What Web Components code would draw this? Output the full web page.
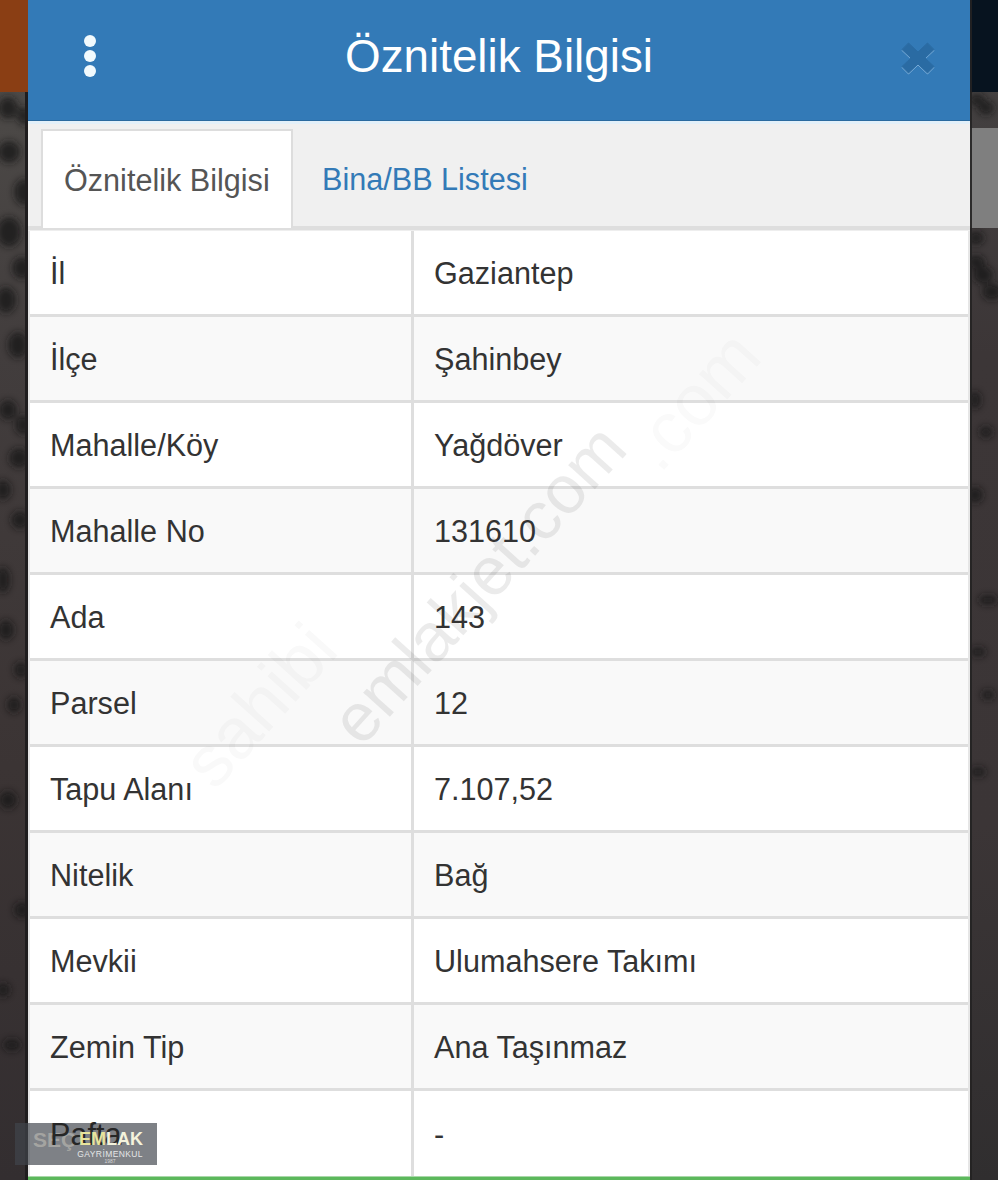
<!DOCTYPE html>
<html lang="tr">
<head>
<meta charset="utf-8">
<title>Öznitelik Bilgisi</title>
<style>
html,body{margin:0;padding:0;background:#333;}
body{font-family:"Liberation Sans",Arial,sans-serif;}
</style>
</head>
<body>
<page-frame>
  <side-strip slot="left" side="left"></side-strip>
  <info-panel>
    <panel-header slot="header" title-text="Öznitelik Bilgisi"></panel-header>
    <tab-bar slot="tabs">
      <tab-item active>Öznitelik Bilgisi</tab-item>
      <tab-item>Bina/BB Listesi</tab-item>
    </tab-bar>
    <attr-row label="İl" value="Gaziantep"></attr-row>
    <attr-row striped label="İlçe" value="Şahinbey"></attr-row>
    <attr-row label="Mahalle/Köy" value="Yağdöver"></attr-row>
    <attr-row striped label="Mahalle No" value="131610"></attr-row>
    <attr-row label="Ada" value="143"></attr-row>
    <attr-row striped label="Parsel" value="12"></attr-row>
    <attr-row label="Tapu Alanı" value="7.107,52"></attr-row>
    <attr-row striped label="Nitelik" value="Bağ"></attr-row>
    <attr-row label="Mevkii" value="Ulumahsere Takımı"></attr-row>
    <attr-row striped label="Zemin Tip" value="Ana Taşınmaz"></attr-row>
    <attr-row last label="Pafta" value="-"></attr-row>
    <water-mark slot="overlay"></water-mark>
  </info-panel>
  <side-strip slot="right" side="right"></side-strip>
  <brand-badge slot="overlay"></brand-badge>
</page-frame>
<script>
function shadow(el, html){ const r = el.attachShadow({mode:'open'}); r.innerHTML = html; return r; }

customElements.define('page-frame', class extends HTMLElement{
  constructor(){ super(); shadow(this, `<style>
    :host{display:flex;width:998px;height:1180px;overflow:hidden;position:relative;}
  </style><slot name="left"></slot><slot></slot><slot name="right"></slot><slot name="overlay"></slot>`); }
});

const spotsL = [[8,108,10,11],[24,116,7,9],[9,152,11,11],[24,192,10,13],[9,232,12,15],[22,268,10,11],[6,300,10,13],[18,345,10,13],[8,410,9,10],[23,425,8,10],[19,458,10,10],[3,490,8,10],[20,520,9,9],[3,580,7,13],[6,630,8,10],[21,670,7,8],[14,705,7,8],[8,800,9,9],[22,910,8,8],[3,990,7,7],[12,1045,9,6]];
const spotsR = [[7,100,8,6],[16,108,8,7],[6,238,8,7],[6,262,9,7],[13,275,10,9],[22,292,10,8],[5,400,6,9],[16,432,7,6],[5,495,8,8],[18,600,10,5],[8,652,8,5],[18,695,7,5],[8,772,8,5]];
customElements.define('side-strip', class extends HTMLElement{
  constructor(){ super();
    const left = this.getAttribute('side')==='left';
    const spots = (left?spotsL:spotsR).map(s=>`<ellipse cx="${s[0]}" cy="${s[1]}" rx="${s[2]}" ry="${s[3]}"/>`).join('');
    const base = left
      ? `<linearGradient id="b" x1="0" y1="0" x2="0" y2="1"><stop offset="0" stop-color="#504e4b"/><stop offset=".3" stop-color="#423d3d"/><stop offset=".65" stop-color="#3b3434"/><stop offset="1" stop-color="#332e30"/></linearGradient>`
      : `<linearGradient id="b" x1="0" y1="0" x2="0" y2="1"><stop offset="0" stop-color="#464444"/><stop offset=".3" stop-color="#3c3637"/><stop offset=".7" stop-color="#3b3536"/><stop offset="1" stop-color="#302e2f"/></linearGradient>`;
    const top = left ? '#8a3e14' : '#07131f';
    const edge = left
      ? `<rect x="25" y="92" width="3" height="1088" fill="#1f1d1e"/>`
      : `<rect x="0" y="0" width="2" height="1180" fill="#242222" opacity=".9"/>`;
    const grey = left ? '' : `<rect x="0" y="128" width="28" height="100" fill="#7f7f7f"/>`;
    shadow(this, `<style>:host{display:block;width:28px;height:1180px;flex:none;}svg{display:block;}</style>
    <svg width="28" height="1180" viewBox="0 0 28 1180" aria-hidden="true">
      <defs>${base}<filter id="f" x="-60%" y="-60%" width="220%" height="220%"><feGaussianBlur stdDeviation="3.500"/></filter></defs>
      <rect width="28" height="1180" fill="url(#b)"/>
      <g fill="#171516" filter="url(#f)" opacity=".75">${spots}</g>
      <rect width="28" height="92" fill="${top}"/>
      ${grey}${edge}
    </svg>`);
  }
});

customElements.define('info-panel', class extends HTMLElement{
  constructor(){ super(); shadow(this, `<style>
    :host{display:flex;flex-direction:column;width:942px;height:1180px;flex:none;background:#eee;position:relative;overflow:hidden;}
    .rows{display:flex;flex-direction:column;padding:0 2px;background:#e6e6e6;flex:none;}
    .foot{flex:1;background:#5cb85c;border-top:1px solid #a9d8a9;}
  </style><slot name="header"></slot><slot name="tabs"></slot><div class="rows"><slot></slot></div><div class="foot"></div><slot name="overlay"></slot>`); }
});

customElements.define('panel-header', class extends HTMLElement{
  constructor(){ super(); shadow(this, `<style>
    :host{display:grid;grid-template-columns:125px 1fr 125px;align-items:center;height:120px;flex:none;background:#337ab7;color:#fff;border-bottom:1px solid #2b6a9f;}
    .dots{display:flex;flex-direction:column;gap:3px;padding-left:56px;margin-top:-8px;}
    .dots i{display:block;width:12px;height:12px;border-radius:50%;background:#f2fafd;}
    h1{margin:0;font:400 45.8px/1 "Liberation Sans",Arial,sans-serif;text-align:center;margin-top:-6px;white-space:nowrap;}
    .close{display:flex;justify-content:flex-end;padding-right:35px;margin-top:-4px;}
    svg{display:block;filter:drop-shadow(0 1.5px 0 rgba(190,220,245,.5));}
  </style>
  <div class="dots"><i></i><i></i><i></i></div>
  <h1>${this.getAttribute('title-text')}</h1>
  <div class="close"><svg width="34" height="32" viewBox="0 0 34 32" aria-hidden="true"><path d="M1 7.500 7.500 1 17 10 26.500 1 33 7.500 24 16 33 24.500 26.500 31 17 22 7.500 31 1 24.500 10 16Z" fill="#2a6ba3" stroke="#2a6ba3" stroke-width="1" stroke-linejoin="round"/></svg></div>`); }
});

customElements.define('tab-bar', class extends HTMLElement{
  constructor(){ super(); shadow(this, `<style>
    :host{display:flex;align-items:flex-end;height:109px;box-sizing:border-box;padding:5px 0 0 13px;flex:none;background:#f0f0f0;border-top:3px solid #e3f0f9;border-bottom:4px solid #dedede;margin-bottom:1px;}
    slot{display:contents;}
  </style><slot></slot>`); }
});

customElements.define('tab-item', class extends HTMLElement{
  constructor(){ super(); shadow(this, `<style>
    :host{display:flex;align-items:center;box-sizing:border-box;height:97px;padding:0 21px;font-size:30.6px;color:#337ab7;border:2px solid transparent;border-bottom:0;white-space:nowrap;flex:none;}
    :host([active]){color:#555;background:#fff;border-color:#ddd;width:252px;margin-bottom:-2px;height:99px;}
    :host(:not([active])){padding-left:27px;}
    span{display:block;padding-top:1px;}
  </style><span><slot></slot></span>`); }
});

customElements.define('attr-row', class extends HTMLElement{
  constructor(){ super(); shadow(this, `<style>
    :host{display:grid;grid-template-columns:384px 1fr;height:86px;box-sizing:border-box;border-bottom:3px solid #dedede;background:#fff;color:#333;font-size:30.6px;flex:none;}
    :host([striped]){background:#f9f9f9;}
    :host([last]){border-bottom:0;height:85px;}
    :host([last]) span{position:relative;z-index:3;color:#262626;}
    div{display:flex;align-items:center;box-sizing:border-box;padding:2px 20px 0;white-space:nowrap;line-height:1;}
    .k{border-right:3px solid #dedede;}
  </style><div class="k"><span>${this.getAttribute('label')}</span></div><div class="v">${this.getAttribute('value')}</div>`); }
});

customElements.define('water-mark', class extends HTMLElement{
  constructor(){ super(); shadow(this, `<style>
    :host{position:absolute;inset:0;pointer-events:none;display:block;overflow:hidden;}
    span{position:absolute;white-space:nowrap;font-family:"Liberation Sans",Arial,sans-serif;font-weight:400;transform-origin:0 100%;transform:rotate(-48deg);line-height:1;}
    .a{left:341px;top:687px;font-size:68px;color:rgba(60,60,60,.10);}
    .b{left:195px;top:727px;font-size:72px;color:rgba(60,60,60,.03);}
    .c{left:640px;top:410px;font-size:72px;color:rgba(60,60,60,.022);}
  </style><span class="b">sahibi</span><span class="a">emlakjet.com</span><span class="c">.com</span>`); }
});

customElements.define('brand-badge', class extends HTMLElement{
  constructor(){ super(); shadow(this, `<style>
    :host{position:absolute;left:15px;top:1123px;width:142px;height:42px;background:rgba(65,70,76,.68);display:block;overflow:hidden;font-family:"Liberation Sans",Arial,sans-serif;}
    .row{display:flex;align-items:flex-start;gap:2px;padding:6px 0 0 18px;}
    .sec{font-weight:700;font-size:21px;line-height:21px;color:rgba(190,188,180,.62);width:42px;flex:none;}
    .col{display:flex;flex-direction:column;align-items:flex-end;width:66px;flex:none;position:relative;z-index:5;}
    .em{font-weight:700;font-size:18px;line-height:20px;color:#f4f3dc;}
    .em b{color:#e8e49c;font-weight:700;}
    .ga{font-size:8.5px;line-height:10px;letter-spacing:.4px;color:#e4e6e6;white-space:nowrap;}
    .yr{font-size:5px;line-height:5px;color:#d8d8d8;align-self:center;}
  </style><div class="row"><div class="sec">SEÇ</div><div class="col"><div class="em"><b>EM</b>LAK</div><div class="ga">GAYRİMENKUL</div><div class="yr">1987</div></div></div>`); }
});
</script>
</body>
</html>
